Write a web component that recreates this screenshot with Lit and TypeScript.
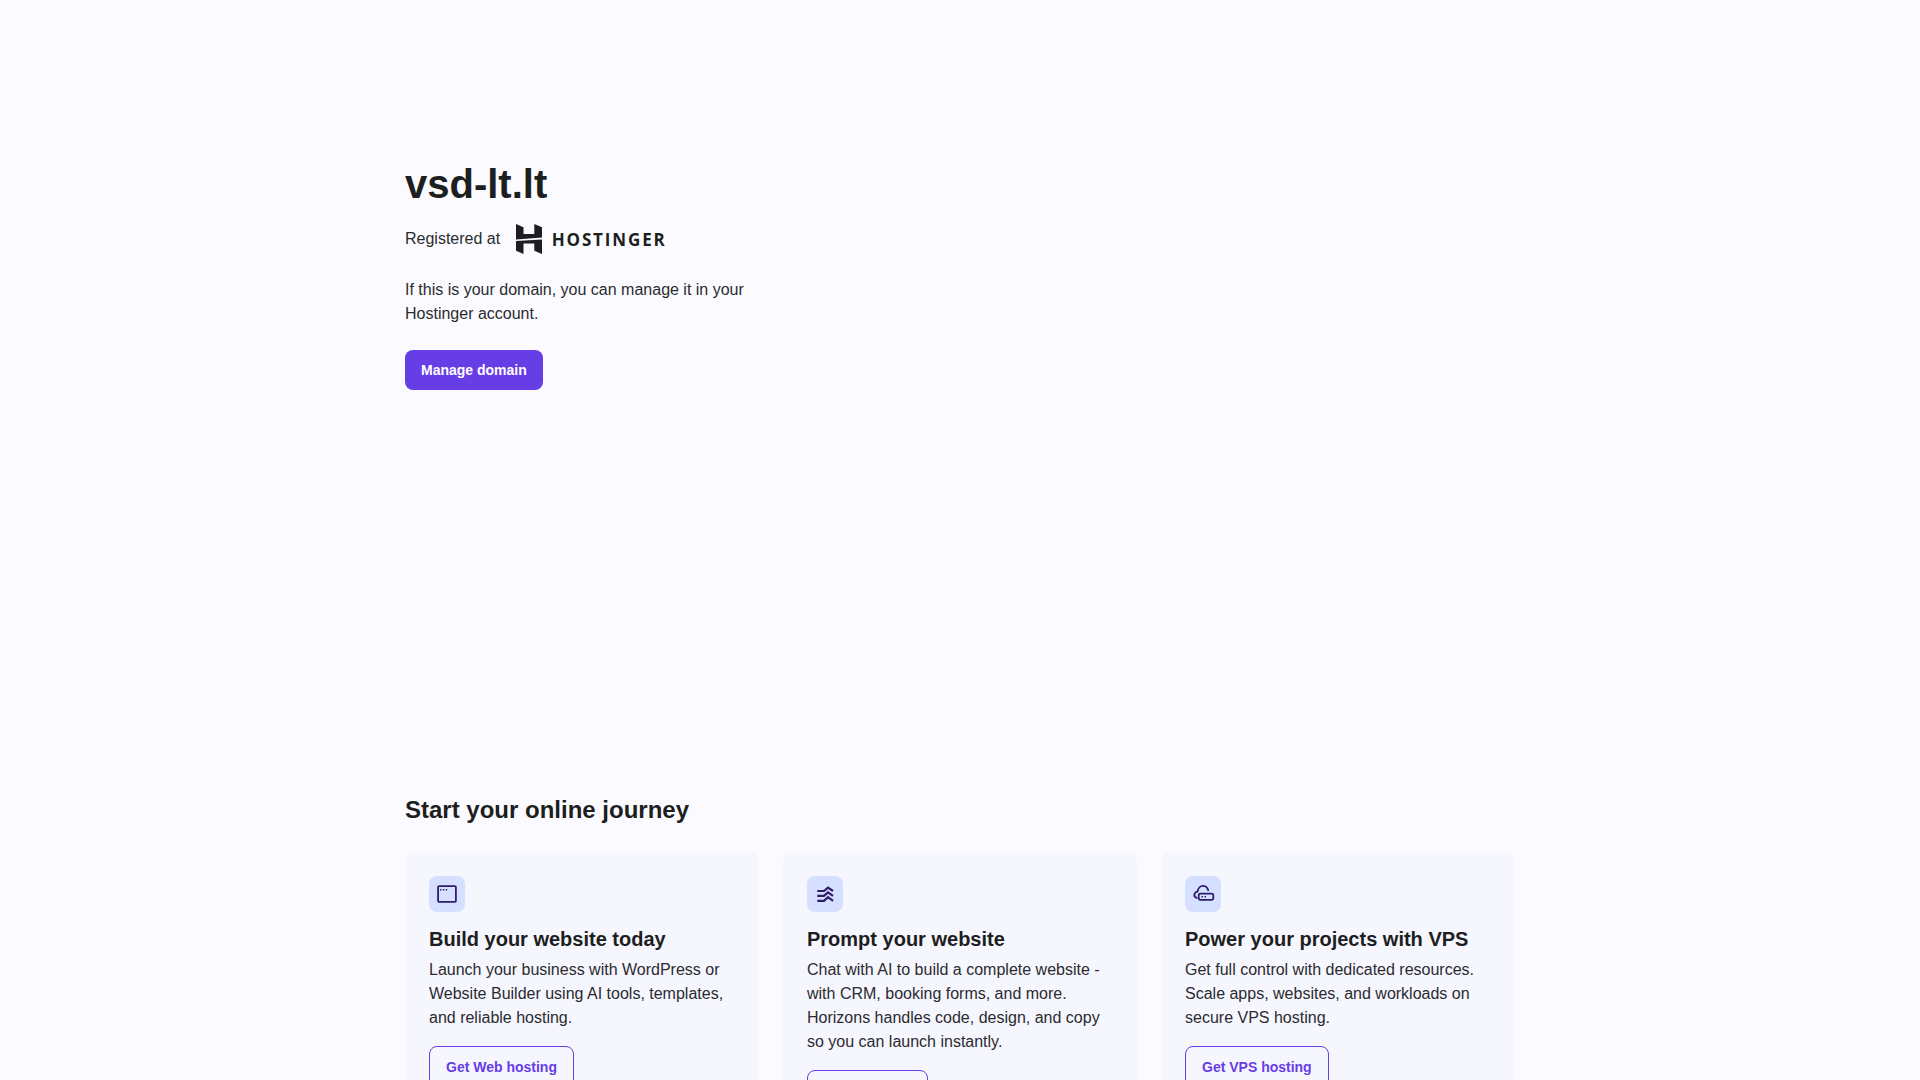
import { LitElement, css, html } from 'lit';
import { customElement } from 'lit/decorators.js';

const windowIcon = html`<svg viewBox="0 0 24 24" fill="none">
  <rect x="3.100" y="4.100" width="17.800" height="15.800" rx="1.200" stroke="currentColor" stroke-width="1.800" />
  <path d="M5 7.700h1.400M7.900 7.700h1.400M10.800 7.700h1.400" stroke="currentColor" stroke-width="1.500" />
</svg>`;

const horizonsIcon = html`<svg viewBox="0 0 24 24" fill="none">
  <path
    d="M4.300 9h6.700l4-3.300 5 3.300M4.300 13.800h6.700l4-3.500 5 3.500M4.300 18.800h6.700l4-3.700 5 3.700"
    stroke="currentColor"
    stroke-width="2.200"
  />
</svg>`;

const cloudIcon = html`<svg viewBox="0 0 24 24" fill="none">
  <path
    d="M5.800 16C3.800 15.300 3 13.700 3.500 12c.4-1.300 1.500-2.200 3-2.300C7 6 9.500 3.600 12.500 3.800c2.400.2 4 1.800 4.700 4.400"
    stroke="currentColor"
    stroke-width="1.800"
    stroke-linecap="round"
  />
  <rect x="7.700" y="11.700" width="14.600" height="6.200" rx="1.800" stroke="currentColor" stroke-width="1.800" />
  <path d="M10.500 14.800h1.500M13.500 14.800h1.500" stroke="currentColor" stroke-width="1.500" />
</svg>`;

const cards = [
  {
    icon: windowIcon,
    title: 'Build your website today',
    text: 'Launch your business with WordPress or Website Builder using AI tools, templates, and reliable hosting.',
    cta: 'Get Web hosting',
  },
  {
    icon: horizonsIcon,
    title: 'Prompt your website',
    text: 'Chat with AI to build a complete website - with CRM, booking forms, and more. Horizons handles code, design, and copy so you can launch instantly.',
    cta: 'Get Horizons',
  },
  {
    icon: cloudIcon,
    title: 'Power your projects with VPS',
    text: 'Get full control with dedicated resources. Scale apps, websites, and workloads on secure VPS hosting.',
    cta: 'Get VPS hosting',
  },
];

@customElement('app-root')
export class AppRoot extends LitElement {
  static styles = css`
    :host {
      display: block;
      height: 1080px;
      overflow: hidden;
      background: #fbfbff;
      color: #1d1e20;
      font-family: 'Liberation Sans', Arial, sans-serif;
    }

    .page {
      width: 1110px;
      margin: 0 auto;
      padding-top: 160px;
    }

    .hero {
      height: 634px;
    }

    h1 {
      margin: 0;
      font-size: 40px;
      line-height: 48px;
      font-weight: 700;
    }

    .registrar {
      display: flex;
      align-items: center;
      gap: 15.5px;
      margin-top: 16px;
      font-size: 16px;
      line-height: 24px;
      height: 30px;
      color: #2a2b2e;
    }

    .logo {
      display: flex;
      align-items: center;
      gap: 10px;
      color: #1d1e20;
    }

    .logo svg {
      width: 26px;
      height: 30px;
      display: block;
    }

    .wordmark {
      font-family: 'Open Sans', 'Noto Sans', sans-serif;
      font-weight: 700;
      font-size: 17px;
      line-height: 29px;
      letter-spacing: 1.85px;
    }

    .lead {
      margin: 24px 0 0;
      width: 354px;
      font-size: 16px;
      line-height: 24px;
      color: #2a2b2e;
    }

    .primary {
      display: inline-block;
      margin-top: 24px;
      height: 40px;
      padding: 0 16px;
      border: 0;
      border-radius: 8px;
      background: #673de6;
      color: #fff;
      font: 700 14px/40px 'Liberation Sans', Arial, sans-serif;
    }

    h2 {
      margin: 0 0 26px;
      font-size: 24px;
      line-height: 32px;
      font-weight: 700;
    }

    .cards {
      display: grid;
      grid-template-columns: repeat(3, 354px);
      gap: 24px;
      align-items: start;
    }

    .card {
      padding: 24px;
      border-radius: 8px;
      background: #f6f6ff;
    }

    .badge {
      width: 36px;
      height: 36px;
      border-radius: 8px;
      background: #d5dfff;
      color: #2f1c6a;
      display: grid;
      place-items: center;
    }

    .badge svg {
      width: 24px;
      height: 24px;
      display: block;
    }

    h3 {
      margin: 12px 0 4px;
      font-size: 20px;
      line-height: 30px;
      font-weight: 700;
    }

    .card p {
      margin: 0;
      font-size: 16px;
      line-height: 24px;
      color: #2a2b2e;
    }

    .outline {
      display: inline-block;
      margin-top: 16px;
      height: 42px;
      box-sizing: border-box;
      padding: 0 16px;
      border: 1px solid #673de6;
      border-radius: 8px;
      background: transparent;
      color: #673de6;
      font: 700 14px/40px 'Liberation Sans', Arial, sans-serif;
    }
  `;

  render() {
    return html`
      <main class="page">
        <section class="hero">
          <h1>vsd-lt.lt</h1>
          <div class="registrar">
            <span>Registered at</span>
            <span class="logo">
              <svg viewBox="0 0 26 30" fill="currentColor">
                <path d="M0 0l7.500 3.300V10h10.800V0L26 3.300v10.300L0 15.500z" />
                <path d="M0 17l26-1.400V30l-7.700-3.300v-7.200H7.500V30L0 26.700z" />
              </svg>
              <span class="wordmark">HOSTINGER</span>
            </span>
          </div>
          <p class="lead">If this is your domain, you can manage it in your Hostinger account.</p>
          <button class="primary">Manage domain</button>
        </section>
        <h2>Start your online journey</h2>
        <div class="cards">
          ${cards.map(
            (card) => html`
              <article class="card">
                <div class="badge">${card.icon}</div>
                <h3>${card.title}</h3>
                <p>${card.text}</p>
                <button class="outline">${card.cta}</button>
              </article>
            `,
          )}
        </div>
      </main>
    `;
  }
}
